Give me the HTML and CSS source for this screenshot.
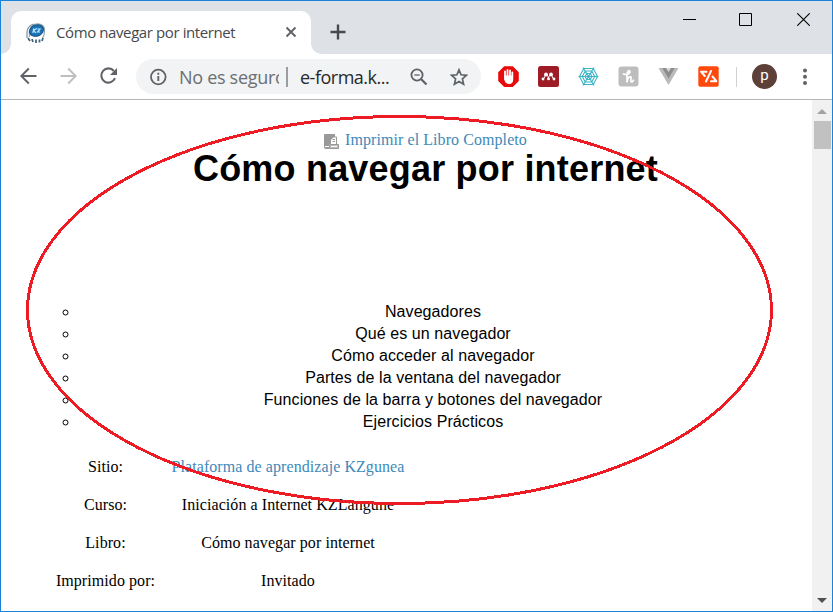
FILE: index.html
```html
<!DOCTYPE html>
<html lang="es">
<head>
<meta charset="utf-8">
<title>Cómo navegar por internet</title>
<link rel="stylesheet" href="styles.css">
</head>
<body>
<div class="window">
  <header class="tabstrip">
    <div class="tab">
      <svg class="favicon" width="20" height="22" viewBox="0 0 20 22">
        <path d="M1 16V11C1 6 4 3 8 2" fill="none" stroke="#7d93a3" stroke-width="1.200"/>
        <path d="M3.500 15C2 9 5 3 10 2c5-1 9 2 8.500 7 0 3-.5 5-2 7" fill="none" stroke="#8fa4b3" stroke-width="1.200"/>
        <ellipse cx="10.500" cy="8.500" rx="7.200" ry="5.600" transform="rotate(-22 10.500 8.500)" fill="#1874b8" stroke="#174d78"/>
        <path d="M7.800 6.500l-1 4.500M11 6.300l-3.500 2.500 2.500 2M11.500 7h2.500l-2.500 3h2.500" fill="none" stroke="#b9e1fb" stroke-width="1.200"/>
        <path d="M2 16l2 3M6 17l1 3M10 17.500v3.500M13.500 17.500v3M17 16l-1 3" stroke="#42667e" stroke-width="1.800"/>
      </svg>
      <span class="tab-title">Cómo navegar por internet</span>
      <svg class="tab-close" width="12" height="12" viewBox="0 0 12 12"><path d="M1.500 1.500l9 9M10.500 1.500l-9 9" stroke="#5f6368" stroke-width="1.900"/></svg>
    </div>
    <svg class="new-tab" width="16" height="16" viewBox="0 0 16 16"><path d="M8 .5v15M.5 8h15" stroke="#46494d" stroke-width="2.400"/></svg>
    <div class="controls">
      <svg width="13" height="13" viewBox="0 0 13 13"><path d="M0 6.500h13" stroke="#000"/></svg>
      <svg width="13" height="13" viewBox="0 0 13 13"><path d="M.5.5h12v12H.5z" fill="none" stroke="#000"/></svg>
      <svg class="close" width="13" height="13" viewBox="0 0 13 13"><path d="M.3.3l12.400 12.400M12.700.3L.3 12.700" stroke="#000" stroke-width="1.100"/></svg>
    </div>
  </header>
  <nav class="toolbar">
    <div class="nav-icons">
      <svg width="18" height="18" viewBox="0 0 18 18" fill="none" stroke="#5f6368" stroke-width="1.900"><path d="M17.500 9H2.500M9.800 1.500L2.300 9l7.500 7.500"/></svg>
      <svg width="18" height="18" viewBox="0 0 18 18" fill="none" stroke="#bdbfc1" stroke-width="1.900"><path d="M1.500 9h15M9.200 1.500L16.700 9l-7.500 7.500"/></svg>
      <svg width="18" height="18" viewBox="0 0 18 18"><path d="M14.900 4A7.100 7.100 0 1 0 16 11.200" fill="none" stroke="#5f6368" stroke-width="2.100"/><path d="M18 1v7h-7z" fill="#5f6368"/></svg>
    </div>
    <div class="omnibox">
      <svg class="info" width="18" height="18" viewBox="0 0 18 18"><circle cx="9.300" cy="9" r="7.300" fill="none" stroke="#5f6368" stroke-width="1.800"/><path d="M9.300 8v5M9.300 4.800v1.900" stroke="#5f6368" stroke-width="1.900"/></svg>
      <span class="unsafe">No es seguro</span>
      <span class="bar"></span>
      <span class="url">e-forma.k...</span>
      <svg class="lens" width="18" height="18" viewBox="0 0 18 18" fill="none" stroke="#5f6368"><circle cx="7" cy="7" r="5.600" stroke-width="1.800"/><path d="M11 11l5.500 5.500" stroke-width="2.300"/><path d="M4.300 7h5.400" stroke-width="1.300"/></svg>
      <svg class="star" width="18" height="18" viewBox="0 0 18 18"><path d="M9 1.800l2.100 5 5.400.5-4.100 3.600 1.200 5.300L9 13.400l-4.600 2.800 1.200-5.300-4.100-3.600 5.400-.5z" fill="none" stroke="#5f6368" stroke-width="1.700"/></svg>
    </div>
    <div class="extensions">
      <svg width="21" height="21" viewBox="0 0 21 21"><path d="M6.200.3h8.600l6 6v8.600l-6 6H6.200l-6-6V6.300z" fill="#e90b0b"/><path d="M7 11V5.500M9.500 10V4M12 10V4.300M14.300 11V6.300" stroke="#fff" stroke-width="1.800" stroke-linecap="round"/><path d="M6.100 9.500h9.100v4c0 3-1.700 4.500-4.200 4.500-2.200 0-3.700-1-4.900-4.500z" fill="#fff"/></svg>
      <svg width="21" height="21" viewBox="0 0 21 21"><rect width="21" height="21" rx="2.500" fill="#9e1c26"/><path d="M5 13c2 0 1.500-4.500 3-5M10.500 12.500c0-1-.5-2.500-2-4M10.500 12.500c0-1 .5-2.500 2-4M16 13c-2 0-1.500-4.500-3-5" fill="none" stroke="#fff" stroke-width="1"/><g fill="#fff"><circle cx="8" cy="8.500" r="1.900"/><circle cx="13" cy="8.500" r="1.900"/><circle cx="5" cy="13" r="1.400"/><circle cx="10.500" cy="12.800" r="1.500"/><circle cx="16" cy="13" r="1.400"/></g></svg>
      <svg width="21" height="21" viewBox="0 0 21 21" fill="none" stroke="#3bb4c6" stroke-width="1.100"><path d="M5.700 2.500h9.600L19.500 10.500l-4.200 8H5.700l-4.200-8zM7.200 5h6.600l2.900 5.500-2.900 5.500H7.200l-2.900-5.500zM8.700 7.500h3.600l1.600 3-1.600 3H8.700l-1.600-3zM5 1.500l11 18M16 1.500l-11 18M.5 10.500h20"/></svg>
      <svg width="21" height="21" viewBox="0 0 21 21"><rect x=".5" y=".5" width="20" height="20" rx="3" fill="#bdbdbd"/><path d="M5.500 8C8.500 9.300 12.300 7.800 11.800 5.300 11.200 3.300 9 5.500 9 9v7.300c.5-3 2-5.800 3.600-5.600 1.500.3-.6 4 .4 5 .7.600 1.800-.2 2.500-1.500" fill="none" stroke="#fff" stroke-width="1.700" stroke-linecap="round"/></svg>
      <svg width="21" height="21" viewBox="0 0 21 21"><path d="M.5 2h20l-10 17z" fill="#bababa"/><path d="M4.300 2h12.400l-6.200 10.500z" fill="#8d8d8d"/><path d="M8 2h5l-2.500 4z" fill="#d8d8d8"/></svg>
      <svg width="21" height="21" viewBox="0 0 21 21"><rect x=".3" y=".3" width="20.400" height="20.400" rx="2" fill="#ff490d"/><path d="M8.500 5.700H3l3.800 4.300M13 5L8 15.500M14.500 10.500l3.800 4.700H13" fill="none" stroke="#fff" stroke-width="2" stroke-linecap="round" stroke-linejoin="round"/></svg>
    </div>
    <span class="divider"></span>
    <span class="avatar">p</span>
    <svg class="kebab" width="6" height="18" viewBox="0 0 6 18" fill="#5f6368"><circle cx="3" cy="2.500" r="2"/><circle cx="3" cy="8.700" r="2"/><circle cx="3" cy="14.900" r="2"/></svg>
  </nav>
  <div class="viewport">
    <main class="page">
      <div class="print">
        <svg width="16" height="16" viewBox="0 0 16 16"><path d="M0 1q0-1 1-1h10v3L7 6v9H2Q0 15 0 13z" fill="#999"/><path d="M1 12.500h4" stroke="#fff"/><path d="M6.500 10.500V6l2.500-3H12.500v7" fill="#fff" stroke="#999"/><path d="M8.500 5.500h2.500M8.500 7.500h2.500" stroke="#999"/><path d="M5 10h10v5.500H5z" fill="#fff"/><path d="M5.500 10.500h9v4h-9z" fill="#bbb" stroke="#999"/><path d="M7 12.500h6" stroke="#fff"/></svg>
        <a>Imprimir el Libro Completo</a>
      </div>
      <h1>Cómo navegar por internet</h1>
      <ul class="toc">
        <li>Navegadores</li>
        <li>Qué es un navegador</li>
        <li>Cómo acceder al navegador</li>
        <li>Partes de la ventana del navegador</li>
        <li>Funciones de la barra y botones del navegador</li>
        <li>Ejercicios Prácticos</li>
      </ul>
      <div class="details">
        <span>Sitio:</span><a>Plataforma de aprendizaje KZgunea</a>
        <span>Curso:</span><span>Iniciación a Internet KZLangune</span>
        <span>Libro:</span><span>Cómo navegar por internet</span>
        <span>Imprimido por:</span><span>Invitado</span>
      </div>
    </main>
    <aside class="scrollbar">
      <svg width="10" height="5" viewBox="0 0 10 5"><path d="M0 5l5-5 5 5z" fill="#a3a3a3"/></svg>
      <div class="thumb"></div>
      <svg class="down" width="10" height="5" viewBox="0 0 10 5"><path d="M0 0h10L5 5z" fill="#505050"/></svg>
    </aside>
  </div>
  <svg class="annotation" width="750" height="392" viewBox="0 0 750 392" shape-rendering="crispEdges"><ellipse cx="374.500" cy="196" rx="372" ry="193.500" fill="none" stroke="#ed1c24" stroke-width="3"/></svg>
</div>
</body>
</html>
```

FILE: styles.css
```css
* { box-sizing: border-box; }
body { margin: 0; width: 833px; height: 612px; overflow: hidden; background: #fff; }
svg { display: block; flex: none; }
.window { position: relative; width: 833px; height: 612px; border: 1px solid #1a82d8; display: flex; flex-direction: column; }
.tabstrip { height: 53px; flex: none; display: flex; background: #dee1e6; padding: 10px 0 0 10px; }
.tab { position: relative; width: 300px; height: 43px; background: #fff; border-radius: 10px 10px 0 0; display: flex; align-items: center; padding: 0 14px 0 15px; }
.tab::before, .tab::after { content: ""; position: absolute; bottom: 0; width: 10px; height: 10px; }
.tab::before { left: -10px; background: radial-gradient(circle at 0 0, #dee1e6 9.5px, #fff 10px); }
.tab::after { right: -10px; background: radial-gradient(circle at 100% 0, #dee1e6 9.5px, #fff 10px); }
.tab-title { margin: -2px 0 0 10px; flex: 1; white-space: nowrap; font: 15px/20px "Open Sans", sans-serif; letter-spacing: -.4px; color: #45494d; }
.tab-close { margin-top: -1px; }
.new-tab { margin: 13px 0 0 19px; }
.controls { margin: 2px 22px 0 auto; display: flex; gap: 43px; }
.close { margin-left: 2px; }
.toolbar { height: 46px; flex: none; display: flex; align-items: center; border-bottom: 1px solid #b3b5b7; padding-left: 18px; }
.nav-icons { display: flex; gap: 22px; margin-top: -1px; }
.omnibox { width: 345px; height: 35px; margin-left: 19px; border-radius: 18px; background: #f1f3f4; display: flex; align-items: center; padding-left: 13px; font: 18px/26px "Open Sans", sans-serif; letter-spacing: -.3px; white-space: nowrap; }
.unsafe { width: 100px; margin-left: 12px; overflow: hidden; color: #6b6f73; }
.bar { width: 2px; height: 20px; margin-left: 7px; background: #9b9da0; }
.url { width: 96px; margin-left: 12px; color: #26282c; letter-spacing: -.5px; }
.lens { margin-left: 14px; }
.star { margin-left: 22px; }
.extensions { margin-left: 17px; display: flex; gap: 19px; }
.divider { width: 1px; height: 20px; margin-left: 17px; background: #cfd1d3; }
.avatar { width: 25px; height: 25px; margin-left: 15px; border-radius: 50%; background: #5d4037; color: #fff; font: 15px/22px Roboto, sans-serif; text-align: center; }
.kebab { margin-left: 25px; }
.viewport { flex: 1; min-height: 0; display: flex; }
.page { flex: 1; padding: 29px 0 0 38px; font: 16px/22px "Liberation Serif", serif; letter-spacing: .07px; color: #000; }
.page a { color: #4089b8; }
.print { display: flex; justify-content: center; align-items: center; gap: 5px; height: 22px; }
.print svg { margin-top: 3px; }
h1 { margin: -3px 0 0; text-align: center; font: bold 36px/42px "Liberation Sans", sans-serif; letter-spacing: .2px; white-space: nowrap; }
.toc { list-style: circle; margin: 111px 25px 0 40px; padding: 0; text-align: center; font: 16px/22px "Liberation Sans", sans-serif; letter-spacing: .09px; }
.details { margin: 15px 0 0 9px; display: grid; grid-template-columns: 115px 250px; grid-auto-rows: 38px; line-height: 38px; text-align: center; white-space: nowrap; }
.scrollbar { width: 20px; background: #f1f1f1; display: flex; flex-direction: column; align-items: center; padding-top: 9px; }
.thumb { width: 17px; height: 28px; margin-top: 7px; background: #c1c1c1; }
.down { margin: auto 0 8px; }
.annotation { position: absolute; left: 24px; top: 113px; }
```
